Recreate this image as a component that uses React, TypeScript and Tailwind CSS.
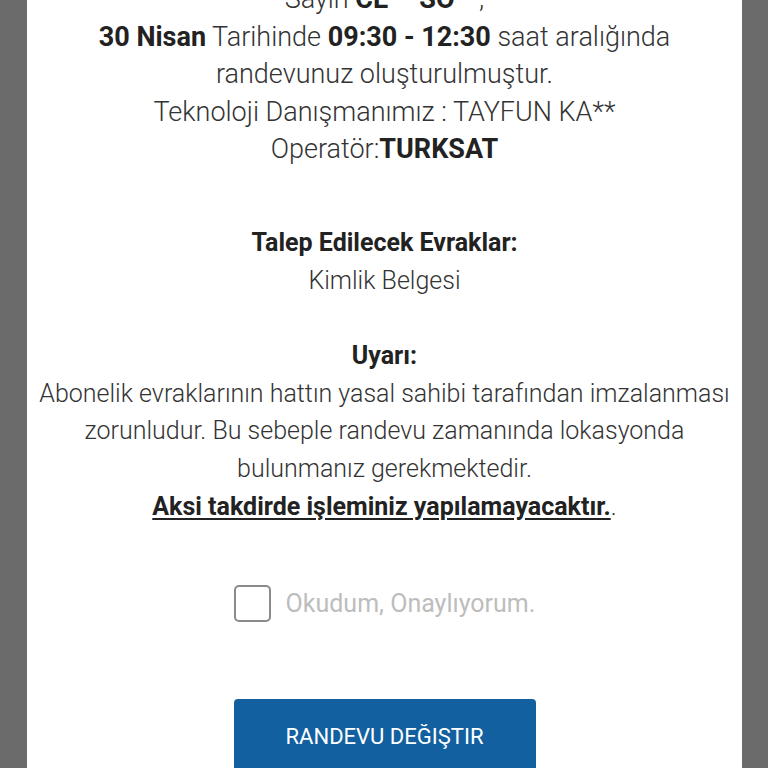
export default function App() {
  return (
    <div className="h-screen overflow-hidden bg-[#6b6b6b] pl-[27px] pr-[26px] font-['Roboto',sans-serif]">
      <div className="flex h-full flex-col overflow-hidden bg-white">
        <div className="-mt-[19px] flex flex-col items-center px-2 text-center text-[25px] font-light leading-[37.6px] text-[#333]">
          <div className="text-[27px]">
            <p>
              Sayın <b className="font-bold text-[#222]">CE** SO**</b>,
            </p>
            <p>
              <b className="font-bold text-[#222]">30 Nisan</b> Tarihinde{" "}
              <b className="font-bold text-[#222]">09:30 - 12:30</b> saat aralığında
            </p>
            <p>randevunuz oluşturulmuştur.</p>
            <p>Teknoloji Danışmanımız : TAYFUN KA**</p>
            <p>
              Operatör:<b className="font-bold text-[#222]">TURKSAT</b>
            </p>
          </div>

          <p className="mt-[55px] font-bold text-[#222]">Talep Edilecek Evraklar:</p>
          <p>Kimlik Belgesi</p>

          <p className="mt-[38px] font-bold text-[#222]">Uyarı:</p>
          <p>
            Abonelik evraklarının hattın yasal sahibi tarafından imzalanması
            <br />
            zorunludur. Bu sebeple randevu zamanında lokasyonda
            <br />
            bulunmanız gerekmektedir.
            <br />
            <u className="font-bold text-[#222] underline-offset-[3px]">Aksi takdirde işleminiz yapılamayacaktır.</u>.
          </p>

          <label className="mt-[60px] flex items-center gap-[15px]">
            <span className="h-[37px] w-[37px] rounded-[5px] border-2 border-[#8a8a8a] bg-white" />
            <span className="font-normal text-[#bdbdbd]">Okudum, Onaylıyorum.</span>
          </label>

          <button className="mt-[76px] h-[72px] w-[302px] shrink-0 rounded-[4px] bg-[#12609f] pt-[4px] text-[22px] font-normal uppercase text-white">
            Randevu Değiştir
          </button>
        </div>
      </div>
    </div>
  );
}
